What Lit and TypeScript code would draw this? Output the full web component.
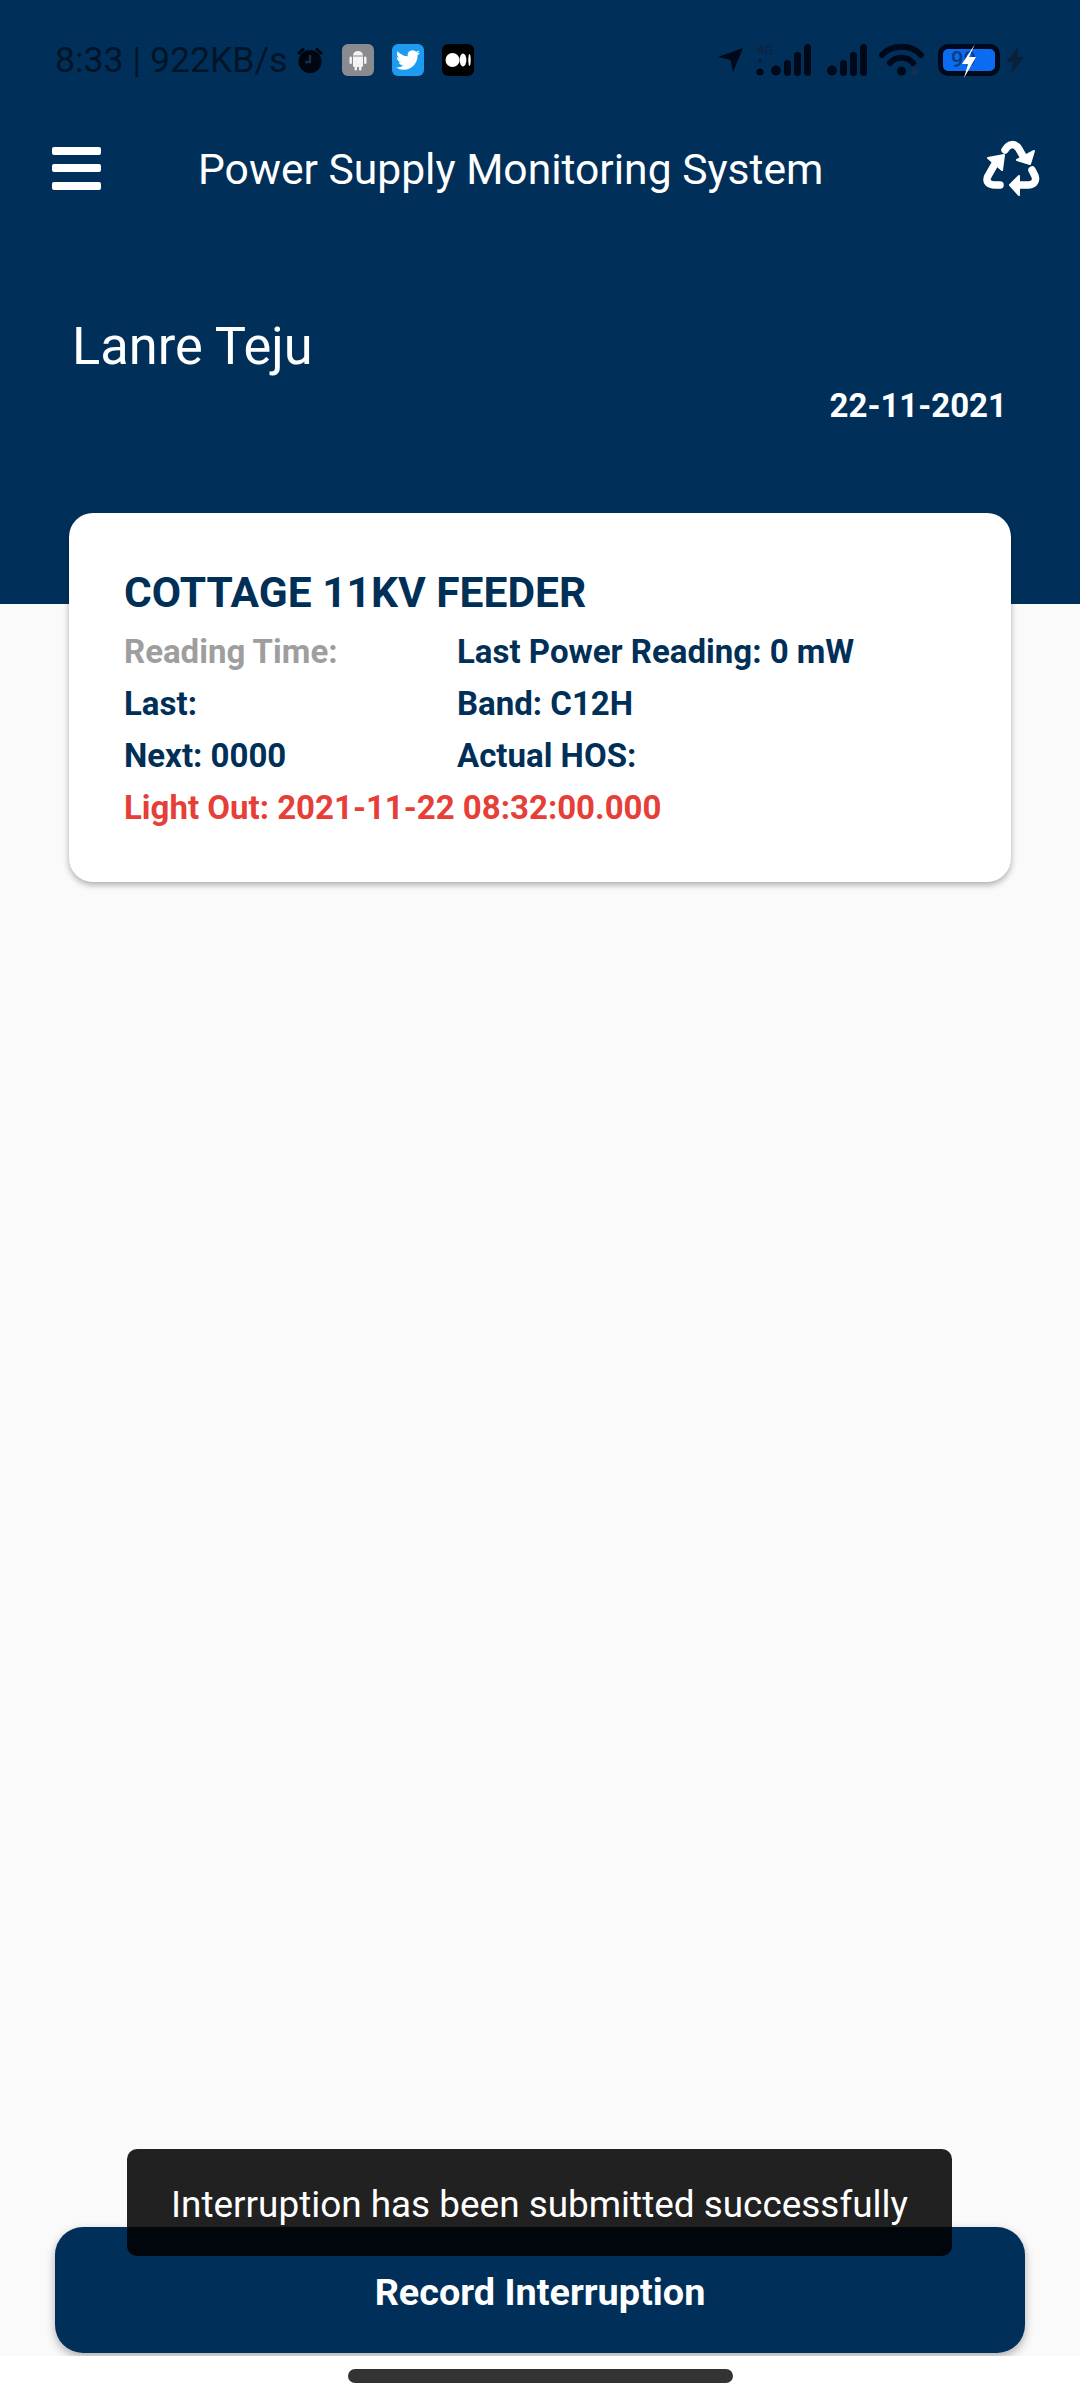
import { LitElement, html, css } from 'lit'
import { customElement } from 'lit/decorators.js'

const twitterPath = 'M23.953 4.57a10 10 0 01-2.825.775 4.958 4.958 0 002.163-2.723c-.951.555-2.005.959-3.127 1.184a4.92 4.92 0 00-8.384 4.482C7.69 8.095 4.067 6.13 1.64 3.162a4.822 4.822 0 00-.666 2.475c0 1.71.87 3.213 2.188 4.096a4.904 4.904 0 01-2.228-.616v.06a4.923 4.923 0 003.946 4.827 4.996 4.996 0 01-2.212.085 4.936 4.936 0 004.604 3.417 9.867 9.867 0 01-6.102 2.105c-.39 0-.779-.023-1.17-.067a13.995 13.995 0 007.557 2.209c9.053 0 13.998-7.496 13.998-13.985 0-.21 0-.42-.015-.63A9.935 9.935 0 0024 4.59z'

@customElement('app-root')
export class AppRoot extends LitElement {
  static styles = css`
    :host {
      display: flex;
      flex-direction: column;
      position: relative;
      width: 1080px;
      height: 2400px;
      overflow: hidden;
      background: #fafafa;
      font-family: Roboto, "Liberation Sans", sans-serif;
      color: #003059;
    }
    svg { display: block; flex: none; }

    /* top blue area */
    .header {
      height: 604px;
      background: #003059;
      color: #fff;
      display: flex;
      flex-direction: column;
      flex: none;
    }
    .status {
      height: 80px;
      margin-top: 20px;
      display: flex;
      align-items: center;
      padding-left: 55px;
      color: #021428;
      font-size: 35.6px;
    }
    .status-time { width: 241px; white-space: nowrap; }
    .alarm { margin-right: 18px; }
    .tile { margin-right: 18px; }
    .status-right {
      margin-left: auto;
      margin-right: 56px;
      display: flex;
      align-items: center;
    }
    .nav-arrow { margin-right: 12px; }
    .signal-b { margin-left: 10px; }
    .wifi { margin-left: 9px; }
    .battery {
      width: 62px;
      height: 32px;
      margin: 0 6px 0 13px;
      box-sizing: border-box;
      border: 5px solid #00091a;
      border-radius: 10px;
      background: #0a6cf0;
      position: relative;
      font-size: 22px;
      font-weight: 500;
      line-height: 22px;
      color: #0b3a86;
      padding-left: 8px;
    }
    .battery svg {
      position: absolute;
      left: 18px;
      top: -5px;
    }
    .appbar {
      height: 100px;
      margin-top: 18px;
      display: flex;
      align-items: center;
      padding-left: 52px;
      padding-right: 38px;
    }
    .burger {
      width: 49px;
      display: flex;
      flex-direction: column;
      gap: 9.5px;
      margin-right: 97px;
    }
    .burger span {
      height: 8px;
      border-radius: 2px;
      background: #fff;
    }
    .title {
      font-size: 42.6px;
      flex: 1;
      white-space: nowrap;
      padding-top: 1px;
    }
    .recycle { margin-top: -6px; }
    .name {
      font-size: 52.4px;
      padding-left: 72px;
      margin-top: 98px;
      line-height: 60px;
    }
    .date {
      font-size: 33px;
      font-weight: 700;
      text-align: right;
      padding-right: 73px;
      line-height: 40px;
      margin-top: 10px;
    }

    .main {
      flex: 1;
      display: flex;
      flex-direction: column;
      padding: 0 55px 3px;
      min-height: 0;
    }
    .card {
      margin: -91px 14px 0;
      height: 369px;
      box-sizing: border-box;
      background: #fff;
      border-radius: 24px;
      box-shadow: 0 3px 6px rgba(0, 0, 0, 0.3);
      padding: 54px 55px 0;
    }
    .card h2 {
      margin: 0 0 7px;
      font-size: 42.5px;
      font-weight: 700;
      line-height: 52px;
      color: #002f57;
    }
    .grid {
      display: grid;
      grid-template-columns: 333px 1fr;
      font-size: 33px;
      font-weight: 700;
      line-height: 52px;
      color: #002f57;
    }
    .muted { color: #9e9e9e; }
    .alert { color: #e53f38; grid-column: 1 / span 2; }
    .record {
      margin-top: auto;
      height: 126px;
      box-sizing: border-box;
      padding-top: 3px;
      border-radius: 28px;
      background: #003059;
      color: #fff;
      font-size: 37.8px;
      font-weight: 700;
      display: flex;
      align-items: center;
      justify-content: center;
      box-shadow: 0 4px 10px rgba(0, 0, 0, 0.3);
    }
    .navbar {
      flex: none;
      background: #fff;
      position: relative;
      display: flex;
      justify-content: center;
      padding-top: 13px;
      height: 31px;
    }
    .navbar span {
      width: 385px;
      height: 14px;
      border-radius: 7px;
      background: #333;
    }
    .toast {
      position: absolute;
      left: 127px;
      top: 2149px;
      width: 825px;
      height: 107px;
      box-sizing: border-box;
      padding-top: 3px;
      border-radius: 10px;
      background: rgba(0, 0, 0, 0.87);
      color: #fff;
      font-size: 36.9px;
      display: flex;
      align-items: center;
      justify-content: center;
      white-space: nowrap;
    }
  `

  renderStatus () {
    return html`
      <div class="status">
        <span class="status-time">8:33 | 922KB/s</span>
        <svg class="alarm" width="28" height="28" viewBox="0 0 28 28" fill="#00060f">
          <circle cx="14" cy="15.500" r="11.500"/>
          <path d="M1 7 7 1.500 9 3.500 3 9zM27 7 21 1.500 19 3.500 25 9z"/>
          <path d="M14 9v7H9" fill="none" stroke="#17314c" stroke-width="2.400"/>
        </svg>
        <svg class="tile" width="32" height="32" viewBox="0 0 32 32">
          <rect width="32" height="32" rx="6" fill="#8a8b8e"/>
          <path d="M11 11.500a5 4.500 0 0 1 10 0zM11 12.500h10v9a1.500 1.500 0 0 1-1.500 1.500h-7a1.500 1.500 0 0 1-1.500-1.500z" fill="#f4f4f4"/>
          <rect x="7.500" y="12.500" width="2.400" height="7.500" rx="1.200" fill="#f4f4f4"/>
          <rect x="22.100" y="12.500" width="2.400" height="7.500" rx="1.200" fill="#f4f4f4"/>
          <rect x="12.600" y="22" width="2.400" height="4.500" rx="1.200" fill="#f4f4f4"/>
          <rect x="17" y="22" width="2.400" height="4.500" rx="1.200" fill="#f4f4f4"/>
        </svg>
        <svg class="tile" width="32" height="32" viewBox="0 0 32 32">
          <rect width="32" height="32" rx="6" fill="#1d9bf0"/>
          <g transform="translate(4 4)" fill="#fff"><path d="${twitterPath}"/></g>
        </svg>
        <svg width="32" height="32" viewBox="0 0 32 32">
          <rect width="32" height="32" rx="6" fill="#000"/>
          <circle cx="10.500" cy="16" r="7" fill="#fff"/>
          <ellipse cx="21" cy="16" rx="3.400" ry="6.500" fill="#fff"/>
          <ellipse cx="27.500" cy="16" rx="1.200" ry="6" fill="#fff"/>
        </svg>
        <div class="status-right">
          <svg class="nav-arrow" width="27" height="26" viewBox="0 0 27 26" fill="#00091a">
            <path d="M26 1 16 25 13.500 13 1 10z"/>
          </svg>
          <svg width="60" height="34" viewBox="0 0 60 34">
            <text x="1" y="11" font-size="13" font-family="Roboto" fill="#0b2038">4G</text>
            <g fill="#00091a">
              <circle cx="4" cy="29" r="3.500"/>
              <rect x="2.500" y="16" width="3" height="4" fill="#0b2038"/>
              <circle cx="20" cy="27.500" r="5"/>
              <rect x="28" y="17" width="7" height="16" rx="3.500"/>
              <rect x="38" y="9" width="7" height="24" rx="3.500"/>
              <rect x="48" y="1" width="7" height="32" rx="3.500"/>
            </g>
          </svg>
          <svg class="signal-b" width="44" height="34" viewBox="0 0 44 34" fill="#00091a">
            <circle cx="6" cy="27.500" r="5"/>
            <rect x="14" y="17" width="7" height="16" rx="3.500"/>
            <rect x="24" y="9" width="7" height="24" rx="3.500"/>
            <rect x="34" y="1" width="7" height="32" rx="3.500"/>
          </svg>
          <svg class="wifi" width="46" height="34" viewBox="0 0 46 34" fill="none" stroke="#00091a" stroke-width="6" stroke-linecap="round">
            <path d="M3 12C13 1 32 1 42 12"/>
            <path d="M11 20C17 13 28 13 34 20"/>
            <circle cx="22.500" cy="28" r="4.500" fill="#00091a" stroke="none"/>
            <circle cx="36" cy="29" r="3.500" fill="#12304f" stroke="none"/>
          </svg>
          <div class="battery">99
            <svg width="16" height="34" viewBox="0 0 16 34">
              <path d="M14 0 1 20h6L3 34 15 13H8z" fill="#fff"/>
            </svg>
          </div>
          <svg width="18" height="28" viewBox="0 0 18 28" fill="#0b2038">
            <path d="M13 0 0 16h7L5 28 18 11h-7z"/>
          </svg>
        </div>
      </div>
    `
  }

  render () {
    return html`
      <div class="header">
        ${this.renderStatus()}
        <div class="appbar">
          <div class="burger"><span></span><span></span><span></span></div>
          <div class="title">Power Supply Monitoring System</div>
          <svg class="recycle" width="70" height="70" viewBox="0 0 70 70" fill="#fff" stroke="#fff" stroke-linecap="round" stroke-linejoin="round">
            <g fill="none" stroke-width="7.500">
              <path d="M33 20C37 13 43 13 47 19L52 28"/>
              <path d="M24 32 16 46C13 52 17 55 23 55H28"/>
              <path d="M60 40 63 46C65 52 61 55 56 55H46"/>
            </g>
            <g stroke-width="2">
              <path d="M62 21 58 34 45 30z"/>
              <path d="M16 28 32 25 30 40z"/>
              <path d="M47 46 38 55 47 65z"/>
            </g>
          </svg>
        </div>
        <div class="name">Lanre Teju</div>
        <div class="date">22-11-2021</div>
      </div>
      <div class="main">
        <div class="card">
          <h2>COTTAGE 11KV FEEDER</h2>
          <div class="grid">
            <span class="muted">Reading Time:</span>
            <span>Last Power Reading: 0 mW</span>
            <span>Last:</span>
            <span>Band: C12H</span>
            <span>Next: 0000</span>
            <span>Actual HOS:</span>
            <span class="alert">Light Out: 2021-11-22 08:32:00.000</span>
          </div>
        </div>
        <div class="record">Record Interruption</div>
      </div>
      <div class="navbar"><span></span></div>
      <div class="toast">Interruption has been submitted successfully</div>
    `
  }
}
